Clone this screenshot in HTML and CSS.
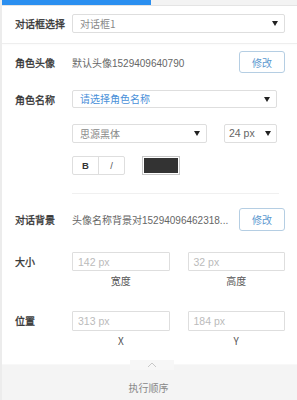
FILE: index.html
```html
<!DOCTYPE html>
<html lang="zh">
<head>
<meta charset="utf-8">
<link rel="stylesheet" href="styles.css">
</head>
<body>
<div class="topbar"><div class="tab-active"></div></div>
<div class="panel">
  <div class="row r1">
    <div class="label">对话框选择</div>
    <div class="select wide"><span>对话框1</span><i class="caret"></i></div>
  </div>
</div>
<div class="sep-full"></div>
<div class="panel">
  <div class="row r2">
    <div class="label">角色头像</div>
    <div class="value">默认头像1529409640790</div>
    <button class="btn">修改</button>
  </div>
  <div class="row r3">
    <div class="label">角色名称</div>
    <div class="select narrow"><span class="blue">请选择角色名称</span><i class="caret"></i></div>
  </div>
  <div class="row r4">
    <div class="label"></div>
    <div class="fontline">
      <div class="select font"><span>思源黑体</span><i class="caret"></i></div>
      <div class="select size"><span class="dark">24 px</span><i class="caret"></i></div>
    </div>
  </div>
  <div class="row r5">
    <div class="label"></div>
    <div class="styleline">
      <div class="bi"><span class="b">B</span><span class="i">/</span></div>
      <div class="swatch"></div>
    </div>
  </div>
  <div class="sep-inner"></div>
  <div class="row r6">
    <div class="label">对话背景</div>
    <div class="value">头像名称背景对15294096462318...</div>
    <button class="btn">修改</button>
  </div>
  <div class="row r7">
    <div class="label">大小</div>
    <div class="pair">
      <div class="field"><div class="input">142 px</div><div class="cap">宽度</div></div>
      <div class="field"><div class="input">32 px</div><div class="cap">高度</div></div>
    </div>
  </div>
  <div class="row r8">
    <div class="label">位置</div>
    <div class="pair">
      <div class="field"><div class="input tall">313 px</div><div class="cap">X</div></div>
      <div class="field"><div class="input tall">184 px</div><div class="cap">Y</div></div>
    </div>
  </div>
</div>
<div class="footer">
  <div class="pull"><svg width="10" height="6" viewBox="0 0 10 6"><path d="M1 5 L5 1 L9 5" fill="none" stroke="#c8c8c8" stroke-width="1"/></svg></div>
  <div class="footer-text">执行顺序</div>
</div>
</body>
</html>
```
FILE: styles.css
```css
* { box-sizing: border-box; }
html, body { margin: 0; padding: 0; }
body {
  width: 297px;
  height: 400px;
  overflow: hidden;
  background: #fff;
  font-family: "Noto Sans CJK SC", "Noto Sans", sans-serif;
  font-size: 10px;
  color: #666;
  border-left: 2px solid #ececec;
}
.topbar {
  height: 6px;
  background: #f3f3f3;
  border-bottom: 1px solid #e4e4e4;
  margin-left: -2px;
}
.tab-active {
  width: 151px;
  height: 5px;
  background: #2b8ff0;
}
.panel { padding: 0 12px 0 13px; }
.row { display: flex; align-items: center; }
.label {
  width: 57px;
  flex: none;
  color: #333;
  font-weight: 400;
  -webkit-text-stroke: 0.3px #333;
  font-size: 10px;
}
.select {
  height: 19px;
  border: 1px solid #dedede;
  border-radius: 2px;
  display: flex;
  align-items: center;
  justify-content: space-between;
  padding: 0 6px 0 7px;
  color: #888;
  background: #fff;
}
.select span { line-height: 1; }
.blue { color: #4a90d9; }
.dark { color: #666; font-family: "Liberation Sans", sans-serif; font-size: 10.5px; }
.caret {
  width: 0; height: 0;
  border-left: 3.5px solid transparent;
  border-right: 3.5px solid transparent;
  border-top: 5px solid #222;
}
.wide { flex: 1; }
.narrow { width: 205px; height: 18px; }
.r1 { margin-top: 8px; }
.sep-full {
  height: 1px;
  background: #eeeeee;
  margin-top: 10px;
  box-shadow: 0 1px 2px rgba(0,0,0,0.03);
}
.r2 { margin-top: 7px; height: 22px; }
.value {
  flex: 1;
  color: #666;
  white-space: nowrap;
  overflow: hidden;
  font-family: "Liberation Sans", "Noto Sans CJK SC", sans-serif;
}
.btn {
  width: 46px;
  height: 22px;
  border: 1px solid #b5cee3;
  border-radius: 3px;
  background: #fff;
  color: #5b98cf;
  font-family: inherit;
  font-size: 10px;
  padding: 0;
  flex: none;
}
.r3 { margin-top: 17px; }
.r4 { margin-top: 16px; }
.fontline { display: flex; gap: 17px; }
.font { width: 135px; }
.size { width: 53px; padding: 0 5px 0 4px; }
.r5 { margin-top: 13px; }
.styleline { display: flex; gap: 17px; align-items: center; }
.bi {
  display: flex;
  width: 53px;
  height: 19px;
  border: 1px solid #dedede;
  border-radius: 2px;
}
.bi span {
  flex: 1;
  display: flex;
  align-items: center;
  justify-content: center;
  font-family: "Liberation Sans", sans-serif;
  font-size: 9.5px;
  color: #333;
}
.bi .b { font-weight: 700; border-right: 1px solid #dedede; }
.bi .i { color: #555; }
.swatch {
  width: 38px;
  height: 19px;
  background: #333;
  border: 1px solid #c8c8c8;
  box-shadow: inset 0 0 0 1px #fff;
}
.sep-inner {
  height: 1px;
  background: #f0f0f0;
  margin: 18px 6px 0 57px;
}
.r6 { margin-top: 14px; height: 23px; }
.r6 .btn { height: 23px; }
.r7 { margin-top: 21px; align-items: flex-start; }
.r7 .label { line-height: 19px; }
.r8 { margin-top: 23px; align-items: flex-start; }
.r8 .label { line-height: 20px; }
.pair { flex: 1; display: grid; grid-template-columns: 1fr 1fr; gap: 18px; }
.input {
  height: 19px;
  border: 1px solid #dedede;
  border-radius: 1px;
  color: #bbb;
  padding-left: 5px;
  display: flex;
  align-items: center;
  font-family: "Liberation Sans", sans-serif;
  font-size: 10.5px;
}
.input.tall { height: 20px; }
.cap {
  text-align: center;
  margin-top: 3px;
  line-height: 14px;
  color: #555;
  font-size: 10px;
}
.field:first-child .cap, .field:last-child .cap { font-family: "Noto Sans CJK SC", "Liberation Sans", sans-serif; }
.footer {
  position: relative;
  margin-top: 16px;
  margin-left: -2px;
  height: 40px;
  background: #f4f4f4;
  border-top: 1px solid #f8f8f8;
}
.pull {
  position: absolute;
  left: 130px;
  top: -5px;
  width: 44px;
  height: 10px;
  background: #f7f7f7;
  display: flex;
  align-items: center;
  justify-content: center;
}
.footer-text {
  text-align: center;
  padding-top: 15px;
  color: #888;
  font-size: 10px;
}
```
